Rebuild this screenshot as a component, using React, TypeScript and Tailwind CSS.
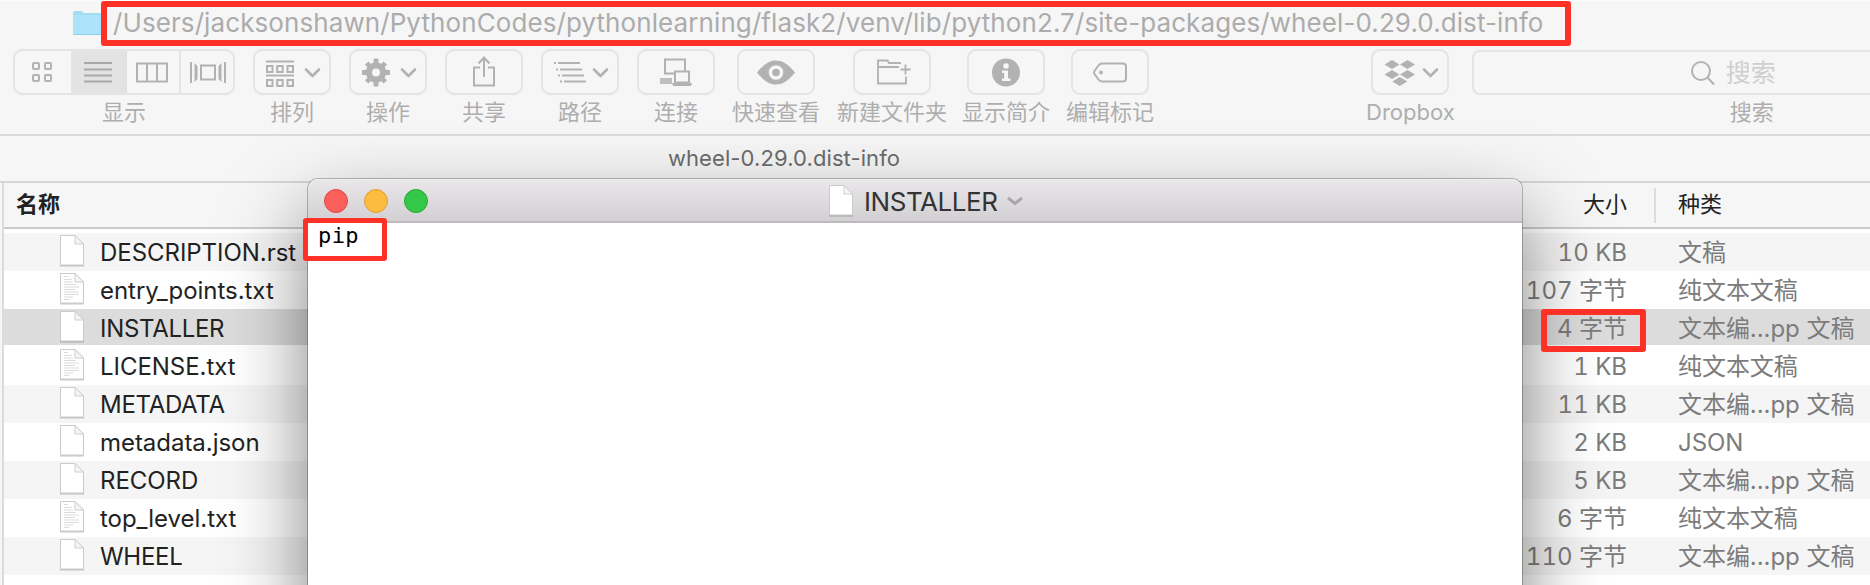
import React from "react";

const latin = "font-['Inter','Noto_Sans_CJK_SC',sans-serif]";
const C = "#b2b2b2";

function Chevron({ x }: { x: number }) {
  return <path d={`M${x} 20.5l6.5 6.5l6.5-6.5`} fill="none" stroke={C} strokeWidth="2.6" strokeLinecap="round" strokeLinejoin="round" />;
}

function Tool({ label, className, children }: { label: string; className: string; children: React.ReactNode }) {
  return (
    <div className={`flex shrink-0 flex-col items-center ${className}`}>
      <div className="h-[46px] w-[78px] rounded-[9px] border-2 border-[#e4e4e4]">
        <svg className="-m-[2px] block h-[46px] w-[78px]" viewBox="0 0 78 46">{children}</svg>
      </div>
      <div className="mt-px whitespace-nowrap text-[22px] leading-[32px] text-[#aeaeae]">{label}</div>
    </div>
  );
}

function Doc({ lines = false }: { lines?: boolean }) {
  return (
    <svg className="block h-[34px] w-[28px] shrink-0" viewBox="0 0 28 34">
      <path d="M2 31.800h24" stroke="#000" strokeOpacity=".2" strokeWidth="1.500" />
      <path d="M2.500 1.500h14.500l8.500 8.500v21H2.500z" fill="#fff" stroke="#cacaca" strokeWidth="1" />
      {lines && (
        <path d="M6 4.500h4M6 7.500h8M6 10h9M6 12.500h12M6 15h15M6 17.500h11M6 20h15M6 22.500h15M6 25h9M6 27.500h5" stroke="#dadada" strokeWidth="1" />
      )}
      <path d="M17 1.500v8.500h8.500z" fill="#f5f5f5" stroke="#cfcfcf" strokeWidth="1" />
    </svg>
  );
}

const files = [
  { name: "DESCRIPTION.rst", size: "10 KB", kind: "文稿" },
  { name: "entry_points.txt", size: "107 字节", kind: "纯文本文稿", text: true },
  { name: "INSTALLER", size: "4 字节", kind: "文本编...pp 文稿", selected: true, caps: true },
  { name: "LICENSE.txt", size: "1 KB", kind: "纯文本文稿", text: true },
  { name: "METADATA", size: "11 KB", kind: "文本编...pp 文稿", caps: true },
  { name: "metadata.json", size: "2 KB", kind: "JSON" },
  { name: "RECORD", size: "5 KB", kind: "文本编...pp 文稿" },
  { name: "top_level.txt", size: "6 字节", kind: "纯文本文稿", text: true },
  { name: "WHEEL", size: "110 字节", kind: "文本编...pp 文稿", caps: true },
];

function TitleBar() {
  return (
    <div className="flex h-[49px] items-start border-t border-[#fcfcfc]">
      <svg className="ml-[72px] mt-[8px] h-[28px] w-[34px] shrink-0" viewBox="0 0 34 28">
        <path d="M1 4a2 2 0 0 1 2-2h6l3 2h20v22H1z" fill="#a6dcf3" />
        <path d="M1 6h33v19H1z" fill="#abe3fa" />
        <path d="M1 25.500h33" stroke="#8fcfea" />
      </svg>
      <div className="ml-[7px] whitespace-nowrap text-[26px] leading-[44px] tracking-[0.09px] text-[#acacac]">
        /Users/jacksonshawn/PythonCodes/pythonlearning/flask2/venv/lib/python2.7/site-packages/wheel-0.29.0.dist-info
      </div>
    </div>
  );
}

function Toolbar() {
  return (
    <div className="flex h-[87px] items-start border-b-2 border-[#dadada] pl-[13px]">
      <div className="flex w-[222px] shrink-0 flex-col items-center">
        <div className="flex h-[46px] w-[222px] overflow-hidden rounded-[9px] border-2 border-[#e4e4e4]">
          <div className="w-[58px] border-r-2 border-[#e4e4e4]">
            <svg className="h-[42px] w-[55px]" viewBox="15 51 55 42" fill="none" stroke={C} strokeWidth="2">
              <rect x="33" y="63" width="6" height="6" rx="1" /><rect x="45" y="63" width="6" height="6" rx="1" />
              <rect x="33" y="75" width="6" height="6" rx="1" /><rect x="45" y="75" width="6" height="6" rx="1" />
            </svg>
          </div>
          <div className="w-[54px] border-r-2 border-[#e0e0e0] bg-[#e3e3e3]">
            <svg className="h-[42px] w-[52px]" viewBox="73 51 52 42" stroke="#a9a9a9" strokeWidth="2">
              <path d="M84 63h28M84 69.500h28M84 75.500h28M84 81.500h28" />
            </svg>
          </div>
          <div className="w-[54px] border-r-2 border-[#e4e4e4]">
            <svg className="h-[42px] w-[52px]" viewBox="127 51 52 42" fill="none" stroke={C} strokeWidth="2">
              <path d="M137 63.500h30v18h-30zM147 63.500v18M157 63.500v18" />
            </svg>
          </div>
          <svg className="h-[42px] w-[52px]" viewBox="181 51 52 42" fill="none" stroke={C} strokeWidth="2">
            <path d="M191 62v21M225 62v21M201 65.500h14v14h-14z" />
            <path d="M194.500 63l3 3v13l-3 3zM221.500 63l-3 3v13l3 3z" fill={C} stroke="none" />
          </svg>
        </div>
        <div className="mt-px text-[22px] leading-[32px] text-[#aeaeae]">显示</div>
      </div>
      <Tool label="排列" className="ml-[18px]">
        <path d="M13 12.500h28M13 26.500h28" stroke={C} strokeWidth="2" />
        <g fill="none" stroke={C} strokeWidth="2">
          <rect x="14" y="17" width="5.500" height="6" /><rect x="24.200" y="17" width="5.500" height="6" /><rect x="34.500" y="17" width="5.500" height="6" />
          <rect x="14" y="31" width="5.500" height="6" /><rect x="24.200" y="31" width="5.500" height="6" /><rect x="34.500" y="31" width="5.500" height="6" />
        </g>
        <Chevron x={53} />
      </Tool>
      <Tool label="操作" className="ml-[18px]">
        <circle cx="27" cy="23.500" r="7" fill="none" stroke={C} strokeWidth="6.500" />
        <g stroke={C} strokeWidth="4.800">
          <path d="M27 9.500v28M13 23.500h28M17.600 14.100l18.800 18.800M36.400 14.100l-18.800 18.800" />
        </g>
        <circle cx="27" cy="23.500" r="4" fill="#f6f6f6" />
        <Chevron x={53} />
      </Tool>
      <Tool label="共享" className="ml-[18px]">
        <path d="M35 18.500h-6v18h20v-18h-6M39 28V9M33.500 14.500l5.500-6l5.500 6" fill="none" stroke={C} strokeWidth="2" />
      </Tool>
      <Tool label="路径" className="ml-[18px]">
        <path d="M13 14h2M17 14h22M15 20.500h2M19 20.500h22M17 26.500h2M21 26.500h22M19 32.500h2M23 32.500h22" stroke={C} strokeWidth="2" />
        <Chevron x={53} />
      </Tool>
      <Tool label="连接" className="ml-[18px]">
        <path d="M28 10.500h20v14h-20z" fill="none" stroke={C} strokeWidth="2" />
        <path d="M23 29h12v6h-12z" fill={C} opacity=".8" />
        <path d="M38 22.500h14v11h-14z" fill="#f6f6f6" stroke={C} strokeWidth="2" />
        <path d="M35 34h20l-1 3h-18z" fill={C} />
      </Tool>
      <Tool label="快速查看" className="ml-[17px]">
        <path d="M20 23.500C28 14 33 11.500 39 11.500s11 2.500 19 12c-8 9.500-13 12-19 12s-11-2.500-19-12z" fill={C} />
        <circle cx="39" cy="23.500" r="5.500" fill={C} stroke="#f6f6f6" strokeWidth="3.500" />
      </Tool>
      <Tool label="新建文件夹" className="ml-[17px]">
        <path d="M48 14H36l-1.500-2.500h-9.500v23h28v-7M25 18h21M57.500 20.500h-10M52.500 15.500v10" fill="none" stroke={C} strokeWidth="1.800" />
      </Tool>
      <Tool label="显示简介" className="ml-[15px]">
        <circle cx="39" cy="23.500" r="14" fill={C} />
        <circle cx="39" cy="17" r="2.800" fill="#f6f6f6" />
        <path d="M35 21.500h6v8h2.500v2.500h-8.500v-2.500h2.200v-5.500H35z" fill="#f6f6f6" />
      </Tool>
      <Tool label="编辑标记" className="ml-[16px]">
        <path d="M31 14.500h21q3 0 3 3v12q0 3-3 3H31q-2 0-3.500-2l-4-5.500q-1-1.500 0-3l4-5.500q1.500-2 3.500-2z" fill="none" stroke={C} strokeWidth="2" />
        <circle cx="30" cy="23.500" r="1.900" fill={C} />
      </Tool>
      <Tool label="Dropbox" className="ml-[212px]">
        <path d="M21 11l7.500 4.500l-7.500 4.500l-7.500-4.500zM36.500 11l7.500 4.500l-7.500 4.500l-7.500-4.500zM21 21l7.500 4.500l-7.500 4.500l-7.500-4.500zM36.500 21l7.500 4.500l-7.500 4.500l-7.500-4.500zM28.800 28l7.500 4.500l-7.500 4.500l-7.500-4.500z" fill={C} />
        <Chevron x={53} />
      </Tool>
      <div className="ml-[17px] flex w-[560px] shrink-0 flex-col items-center">
        <div className="mt-[1px] flex h-[45px] w-full items-center justify-center rounded-[8px] border-2 border-[#e4e4e4] pr-[38px]">
          <svg className="h-[26px] w-[26px]" viewBox="0 0 26 26" fill="none" stroke={C} strokeWidth="2">
            <circle cx="11" cy="11" r="9" /><path d="M17.500 17.500l6.500 7" />
          </svg>
          <span className="ml-[10px] text-[25px] leading-[40px] text-[#cfcfcf]">搜索</span>
        </div>
        <div className="mt-px text-[22px] leading-[32px] text-[#aeaeae]">搜索</div>
      </div>
    </div>
  );
}

function FileList() {
  return (
    <div className="ml-[2px] border-l-2 border-[#dcdcdc] bg-white">
      <div className="flex h-[46px] items-center border-b-2 border-[#cacaca] bg-[#f6f6f6] text-[22px] text-[#222]">
        <div className="-mt-px ml-[12px] w-[1404px] font-semibold">名称</div>
        <div className="-mt-px w-[207px] text-right">大小</div>
        <div className="ml-[27px] h-[35px] w-[2px] bg-[#dcdcdc]" />
        <div className="-mt-px ml-[22px]">种类</div>
      </div>
      <div className="pt-[4px]">
        {files.map((f, i) => (
          <div
            key={f.name}
            className={`flex h-[38px] items-start text-[24px] leading-[36px] text-[#7c7c7c] ${
              f.selected ? "border-b-2 border-white bg-[#dcdcdc]" : i % 2 === 0 ? "bg-[#f5f5f5]" : "bg-white"
            }`}
          >
            <div className="ml-[54px] mt-px"><Doc lines={f.text} /></div>
            <div className={`ml-[14px] mt-[2px] w-[1320px] whitespace-nowrap text-[#222] ${f.caps ? "tracking-[-0.3px]" : "tracking-[-0.04px]"}`}>{f.name}</div>
            <div className="mt-[2px] w-[207px] whitespace-nowrap text-right tabular-nums">{f.size}</div>
            <div className="ml-[51px] mt-[2px] whitespace-nowrap tracking-[-0.05px]">{f.kind}</div>
          </div>
        ))}
      </div>
      <div className="h-[10px]" />
    </div>
  );
}

function EditorWindow() {
  return (
    <div className="absolute left-[308px] top-[179px] h-[460px] w-[1214px] overflow-visible rounded-t-[10px] bg-white shadow-[0_0_0_1px_rgba(0,0,0,0.25),0_36px_80px_rgba(0,0,0,0.5)]">
      <div className="flex h-[44px] items-center rounded-t-[10px] border-b-2 border-t border-b-[#bcbabc] border-t-[#f0eef0] bg-gradient-to-b from-[#e9e7e9] to-[#d2d0d2]">
        <div className="flex gap-[16px] pl-[16px]">
          <span className="h-[24px] w-[24px] rounded-full border border-[#df4744] bg-[#fc605c]" />
          <span className="h-[24px] w-[24px] rounded-full border border-[#dea034] bg-[#fdbc40]" />
          <span className="h-[24px] w-[24px] rounded-full border border-[#27a934] bg-[#34c84a]" />
        </div>
        <div className="ml-[399px] flex items-center">
          <Doc />
          <span className="ml-[9px] mt-[2px] text-[26px] leading-[36px] tracking-[-0.45px] text-[#333]">INSTALLER</span>
          <svg className="ml-[9px] h-[10px] w-[18px]" viewBox="0 0 18 10">
            <path d="M2 2l7 5.500l7-5.500" fill="none" stroke="#a9a7a9" strokeWidth="3" />
          </svg>
        </div>
      </div>
      <div className="-mt-px pl-[10px] font-['DejaVu_Sans_Mono',monospace] text-[22px] leading-[28px] tracking-[0.4px] text-black">pip</div>
    </div>
  );
}

export default function App() {
  return (
    <div className={`relative h-[585px] w-[1870px] overflow-hidden bg-[#f6f6f6] ${latin}`}>
      <TitleBar />
      <Toolbar />
      <div className="flex h-[47px] items-center justify-center border-b-2 border-[#d6d6d6] pr-[302px] text-[22px] tracking-[0.1px] text-[#6c6c6c]">
        wheel-0.29.0.dist-info
      </div>
      <FileList />
      <EditorWindow />
      <div className="absolute left-[101px] top-[1px] h-[45px] w-[1470px] rounded-[3px] border-[6px] border-[#fd3126]" />
      <div className="absolute left-[303px] top-[218px] h-[43px] w-[84px] rounded-[3px] border-[5.500px] border-[#fd3126]" />
      <div className="absolute left-[1541px] top-[309px] h-[43px] w-[105px] rounded-[3px] border-[6px] border-[#fd3126]" />
    </div>
  );
}
